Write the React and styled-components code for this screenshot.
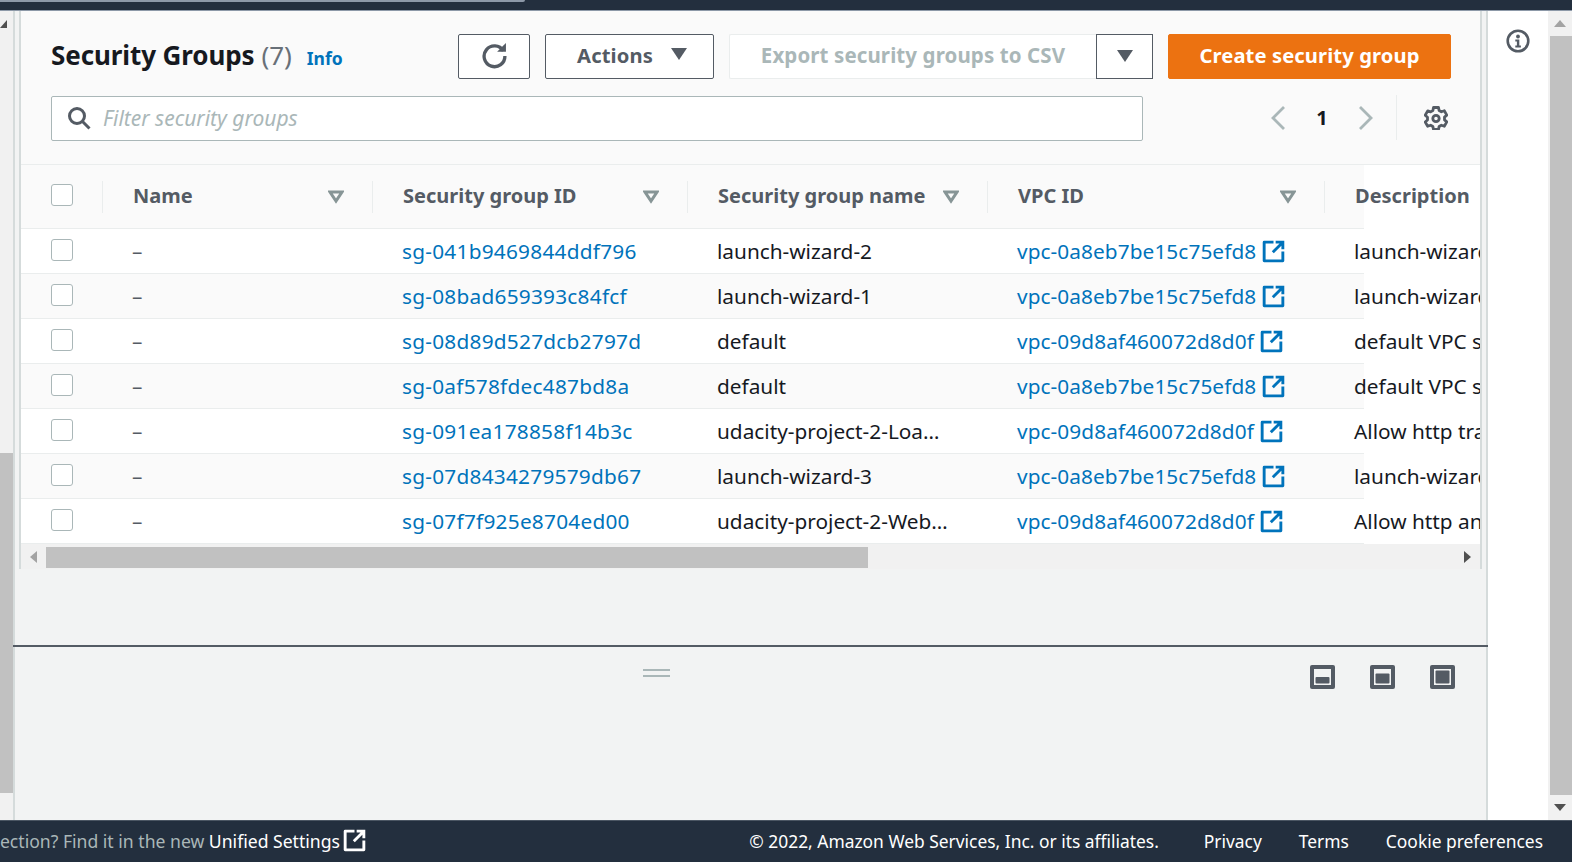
import React from "react";
import styled, { createGlobalStyle } from "styled-components";

const Global = createGlobalStyle`
  html, body { margin: 0; padding: 0; background: #fff; }
  body { font-family: "Noto Sans", "Open Sans", Arial, sans-serif; overflow: hidden; }
  * { box-sizing: border-box; }
`;

const Page = styled.div`
  width: 1572px; height: 862px; display: flex; flex-direction: column; overflow: hidden;
`;
const TopBar = styled.div`
  height: 11px; flex: none; background: #232f3e; border-bottom: 1px solid #8d99a8;
`;
const TopMark = styled.div`
  width: 525px; height: 2px; background: #8d99a8; border-radius: 0 0 2px 0;
`;
const Middle = styled.div`flex: 1; min-height: 0; display: flex;`;
const VScroll = styled.div`
  width: ${p => p.$w}px; flex: none; background: #f1f1f1; display: flex; flex-direction: column;
  align-items: center; position: relative;
`;
const ArrowBox = styled.div`
  height: ${p => p.$h}px; flex: none; width: 100%; display: flex; align-items: center;
  justify-content: ${p => p.$j || "center"};
`;
const Thumb = styled.div`
  background: #c1c1c1; width: 100%; margin: ${p => p.$m}; height: ${p => p.$h}px; flex: ${p => p.$h ? "none" : 1};
`;
const RightThumb = styled(Thumb)`width: 22px; align-self: flex-end;`;
const Main = styled.div`
  flex: none; width: 1475px; background: #f2f3f3; border-left: 2px solid #d5dbdb; border-right: 2px solid #d5dbdb;
  display: flex; flex-direction: column;
`;
const Stage = styled.div`height: 634px; flex: none; padding: 0 5px 0 4px;`;
const Panel = styled.div`
  width: 1463px; border-left: 2px solid #d5dbdb; border-right: 2px solid #d5dbdb; overflow: hidden; background: #fff;
`;
const PanelHead = styled.div`
  background: #fafafa; height: 154px; padding: 23px 29px 0 30px; border-bottom: 1px solid #eaeded;
  display: flex; flex-direction: column; gap: 17px;
`;
const Toolbar = styled.div`display: flex; gap: 15px; align-items: stretch; height: 45px;`;
const TitleWrap = styled.div`flex: 1; display: flex; align-items: center; padding-bottom: 3px;`;
const Title = styled.h1`
  margin: 0; font-size: 26px; font-weight: 700; color: #16191f; letter-spacing: -0.1px;
`;
const Count = styled.span`font-weight: 400; color: #687078; margin-left: 7px;`;
const InfoLink = styled.a`
  color: #0073bb; font-weight: 700; font-size: 17.5px; margin-left: 15px; position: relative; top: 3px;
`;
const Btn = styled.button`
  width: ${p => p.$w}px; flex: none; background: ${p => p.$primary ? "#ec7211" : "#fff"};
  border: 1px solid ${p => p.$primary ? "#ec7211" : "#545b64"}; border-radius: 2px;
  color: ${p => p.$primary ? "#fff" : "#545b64"}; font: 700 20.2px "Noto Sans", sans-serif;
  display: flex; align-items: center; justify-content: center; gap: 17px;
  padding: 0 0 ${p => p.$icon ? 2 : 4}px ${p => p.$pl || 0}px; letter-spacing: .1px;
`;
const Split = styled.div`display: flex; width: 424px; flex: none;`;
const DisabledBtn = styled.button`
  flex: 1; background: #fff; border: 1px solid #eaeded; border-right: 0; border-radius: 2px 0 0 2px;
  color: #aab7b8; font: 700 20.5px "Noto Sans", sans-serif; padding: 0 0 4px; letter-spacing: .1px;
`;
const CaretBtn = styled.button`
  width: 57px; background: #fff; border: 1px solid #545b64; display: flex; align-items: center;
  justify-content: center; padding: 0;
`;
const FilterRow = styled.div`display: flex; height: 45px;`;
const Search = styled.div`
  width: 1092px; flex: none; background: #fff; border: 1px solid #aab7b8; border-radius: 2px;
  display: flex; align-items: center; gap: 12px; padding: 0 0 1px 15px;
  color: #aab7b8; font-size: 21px; font-style: italic;
`;
const Pager = styled.div`flex: 1; display: flex; align-items: center; padding: 0 0 2px 128px;`;
const PageNum = styled.span`
  font-size: 20px; font-weight: 700; color: #16191f; width: 80px; text-align: center;
  margin: 0 -3px;
`;
const PagerDivider = styled.div`
  width: 1px; height: 45px; background: #eaeded; margin: 0 27px 0 23px;
`;
const TableRow = styled.div`
  display: grid; grid-template-columns: 81px 270px 315px 300px 337px 340px; width: 1343px;
  height: ${p => p.$h}px; align-items: center; border-bottom: 1px solid #eaeded; background: ${p => p.$bg};
`;
const HeadCell = styled.div`
  height: 32px; display: flex; align-items: center; justify-content: space-between;
  border-left: 1px solid #eaeded; padding: 0 28px 2px 30px; font-size: 20px; font-weight: 700; color: #545b64;
  white-space: nowrap;
`;
const CheckCell = styled.div`padding-left: 30px; display: flex; align-items: center; height: 100%;`;
const Box = styled.span`
  width: 22px; height: 22px; border: 1px solid #aab7b8; border-radius: 3px; background: #fff; display: block;
  margin-top: ${p => p.$top}px;
`;
const Cell = styled.div`
  padding-left: 30px; font-size: 20.8px; color: ${p => p.$color || "#16191f"}; letter-spacing: ${p => p.$ls || 0}px;
  white-space: nowrap; display: flex; align-items: center; gap: 6px; overflow: hidden;
`;
const HScroll = styled.div`
  height: 25px; background: #f1f1f1; display: flex; align-items: center; padding-top: 1px;
`;
const HThumb = styled.div`height: 21px; width: 822px; background: #c1c1c1; margin: 0 auto 0 0;`;
const HArrow = styled.div`width: ${p => p.$w}px; display: flex; justify-content: center; flex: none;`;
const Drawer = styled.div`
  flex: 1; margin: 0 -2px; border-top: 2px solid #545b64; display: flex; align-items: flex-start; padding: 18px 33px 0 630px;
`;
const Grip = styled.div`
  width: 27px; height: 8px; margin-top: 4px; border-top: 2px solid #aab7b8; border-bottom: 2px solid #aab7b8;
`;
const DrawerIcons = styled.div`margin-left: auto; display: flex; gap: 35px;`;
const Rail = styled.div`
  width: 60px; flex: none; background: #fff; display: flex; justify-content: center; padding-top: 18px;
`;
const Footer = styled.div`
  height: 42px; flex: none; background: #232f3e; border-top: 1px solid #4b5663; display: flex; align-items: center;
  font-size: 17.4px; color: #fff; justify-content: space-between; padding: 0 29px 2px 0; white-space: nowrap;
`;
const FootLeft = styled.div`
  width: 366px; flex: none; display: flex; justify-content: flex-end; align-items: center; gap: 3px; overflow: hidden;
  font-size: 17.6px;
`;
const Muted = styled.span`color: #aab7b8;`;
const FootRight = styled.div`display: flex; gap: 37px;`;
const Copyright = styled.span`margin-right: 8px;`;

const Caret = ({ c = "#545b64", s = 18 }) => (
  <svg width={s} height={s * 0.78} viewBox="0 0 18 14"><path d="M1 1h16L9 13z" fill={c} /></svg>
);
const SortIcon = () => (
  <svg width="16" height="14" viewBox="0 0 16 14" style={{ flex: "none", marginTop: 2 }}><path d="M2 2h12L8 11z" fill="none" stroke="#879596" strokeWidth="3" /></svg>
);
const Ext = ({ c = "#0073bb" }) => (
  <svg width="23" height="23" viewBox="0 0 16 16" fill="none" stroke={c} strokeWidth="2" style={{ flex: "none" }}>
    <path d="M8 1.5H1.5v13h13V8" strokeLinejoin="round" /><path d="M9.5 1.5h5v5M14.5 1.5 7.5 8.5" />
  </svg>
);
const Refresh = () => (
  <svg width="27" height="27" viewBox="0 0 26 26" fill="none">
    <path d="M21.5 8.5A10 10 0 1 0 23 13.5" stroke="#545b64" strokeWidth="3.2" />
    <path d="M15.5 9.5h8.5V1z" fill="#545b64" />
  </svg>
);
const SearchIcon = () => (
  <svg width="24" height="24" viewBox="0 0 24 24" fill="none" stroke="#545b64" strokeWidth="3">
    <circle cx="10" cy="10" r="7.5" /><path d="M15.5 15.5 22.5 22.5" />
  </svg>
);
const Chevron = ({ dir }) => (
  <svg width="14" height="24" viewBox="0 0 14 24" fill="none" stroke="#aab7b8" strokeWidth="2.8">
    <path d={dir === "l" ? "M13 1 2 12l11 11" : "M1 1l11 11L1 23"} />
  </svg>
);
const Gear = () => (
  <svg width="24" height="24" viewBox="0 0 24 24" fill="none" stroke="#545b64" strokeWidth="2.8" strokeLinejoin="round">
    <path d="M9.5 1.5h5l.6 3 2.3 1.3 2.9-1 2.5 4.3-2.3 2v2.8l2.3 2-2.5 4.3-2.9-1-2.3 1.3-.6 3h-5l-.6-3-2.3-1.3-2.9 1L1.2 16l2.3-2v-2.8l-2.3-2 2.5-4.3 2.9 1 2.3-1.3z" />
    <circle cx="12" cy="12.5" r="3.2" />
  </svg>
);
const InfoIcon = () => (
  <svg width="24" height="24" viewBox="0 0 24 24">
    <circle cx="12" cy="12" r="10.3" fill="none" stroke="#545b64" strokeWidth="2.6" />
    <circle cx="12" cy="7.5" r="1.9" fill="#545b64" />
    <path d="M9.3 10.5h4v6h1.6v2H9.3v-2h1.6v-4H9.3z" fill="#545b64" />
  </svg>
);
const PaneIcon = ({ top }) => (
  <svg width="25" height="24" viewBox="0 0 25 24">
    <rect width="25" height="24" rx="2" fill="#545b64" />
    <rect x="4" y="4" width="17" height="16" fill="#f2f3f3" />
    <rect x="5.5" y={top} width="14" height={18.5 - top} rx="1" fill="#545b64" />
  </svg>
);
const Tri = ({ d, c, w = 12, h = 12, box = "0 0 12 12" }) => (
  <svg width={w} height={h} viewBox={box}><path d={d} fill={c} /></svg>
);

const rows = [
  ["sg-041b9469844ddf796", "launch-wizard-2", "vpc-0a8eb7be15c75efd8", "launch-wizard-2 created"],
  ["sg-08bad659393c84fcf", "launch-wizard-1", "vpc-0a8eb7be15c75efd8", "launch-wizard-1 created"],
  ["sg-08d89d527dcb2797d", "default", "vpc-09d8af460072d8d0f", "default VPC security group"],
  ["sg-0af578fdec487bd8a", "default", "vpc-0a8eb7be15c75efd8", "default VPC security group"],
  ["sg-091ea178858f14b3c", "udacity-project-2-Loa…", "vpc-09d8af460072d8d0f", "Allow http traffic"],
  ["sg-07d8434279579db67", "launch-wizard-3", "vpc-0a8eb7be15c75efd8", "launch-wizard-3 created"],
  ["sg-07f7f925e8704ed00", "udacity-project-2-Web…", "vpc-09d8af460072d8d0f", "Allow http and ssh"],
];

export default function App() {
  return (
    <Page>
      <Global />
      <TopBar><TopMark /></TopBar>
      <Middle>
        <VScroll $w={13}>
          <ArrowBox $h={25} $j="flex-start"><Tri d="M0 9 7 1v8z" c="#505050" w={8} h={10} box="0 0 8 10" /></ArrowBox>
          <Thumb $m="417px 0 0" $h={340} />
        </VScroll>
        <Main>
          <Stage>
            <Panel>
              <PanelHead>
                <Toolbar>
                  <TitleWrap>
                    <Title>Security Groups<Count>(7)</Count></Title>
                    <InfoLink>Info</InfoLink>
                  </TitleWrap>
                  <Btn $w={72} $icon><Refresh /></Btn>
                  <Btn $w={169} $pl={6}>Actions<Caret /></Btn>
                  <Split>
                    <DisabledBtn>Export security groups to CSV</DisabledBtn>
                    <CaretBtn><Caret /></CaretBtn>
                  </Split>
                  <Btn $w={283} $primary>Create security group</Btn>
                </Toolbar>
                <FilterRow>
                  <Search><SearchIcon />Filter security groups</Search>
                  <Pager>
                    <Chevron dir="l" />
                    <PageNum>1</PageNum>
                    <Chevron dir="r" />
                    <PagerDivider />
                    <Gear />
                  </Pager>
                </FilterRow>
              </PanelHead>
              <TableRow $h={64} $bg="#fafafa">
                <CheckCell><Box $top={-3} /></CheckCell>
                <HeadCell>Name<SortIcon /></HeadCell>
                <HeadCell>Security group ID<SortIcon /></HeadCell>
                <HeadCell>Security group name<SortIcon /></HeadCell>
                <HeadCell>VPC ID<SortIcon /></HeadCell>
                <HeadCell>Description</HeadCell>
              </TableRow>
              {rows.map((r, i) => (
                <TableRow key={r[0]} $h={45} $bg={i % 2 ? "#fafafa" : "#fff"}>
                  <CheckCell><Box $top={-2} /></CheckCell>
                  <Cell $color="#545b64">–</Cell>
                  <Cell $color="#0073bb" $ls={0.25}>{r[0]}</Cell>
                  <Cell>{r[1]}</Cell>
                  <Cell $color="#0073bb" $ls={0.08}>{r[2]}<Ext /></Cell>
                  <Cell>{r[3]}</Cell>
                </TableRow>
              ))}
              <HScroll>
                <HArrow $w={25}><Tri d="M7 0v12L0 6z" c="#a3a3a3" w={7} h={12} box="0 0 7 12" /></HArrow>
                <HThumb />
                <HArrow $w={26}><Tri d="M0 0v12l7-6z" c="#505050" w={7} h={12} box="0 0 7 12" /></HArrow>
              </HScroll>
            </Panel>
          </Stage>
          <Drawer>
            <Grip />
            <DrawerIcons>
              <PaneIcon top={12} />
              <PaneIcon top={8.5} />
              <PaneIcon top={5.5} />
            </DrawerIcons>
          </Drawer>
        </Main>
        <Rail><InfoIcon /></Rail>
        <VScroll $w={24}>
          <ArrowBox $h={25}><Tri d="M6 0l6 7H0z" c="#a3a3a3" w={12} h={7} box="0 0 12 7" /></ArrowBox>
          <RightThumb $m="0" />
          <ArrowBox $h={25}><Tri d="M0 0h12L6 7z" c="#505050" w={12} h={7} box="0 0 12 7" /></ArrowBox>
        </VScroll>
      </Middle>
      <Footer>
        <FootLeft>
          <span><Muted>Looking for language selection? Find it in the new </Muted>Unified Settings</span>
          <Ext c="#fff" />
        </FootLeft>
        <FootRight>
          <Copyright>© 2022, Amazon Web Services, Inc. or its affiliates.</Copyright>
          <span>Privacy</span>
          <span>Terms</span>
          <span>Cookie preferences</span>
        </FootRight>
      </Footer>
    </Page>
  );
}
